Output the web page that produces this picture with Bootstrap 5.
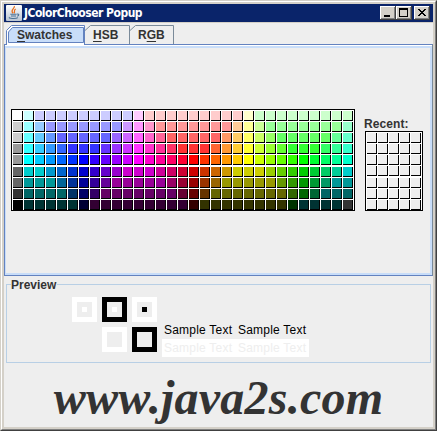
<!DOCTYPE html>
<html lang="en">
<head>
<meta charset="utf-8">
<title>JColorChooser Popup</title>
<link href="https://cdn.jsdelivr.net/npm/bootstrap@5.3.0/dist/css/bootstrap.min.css" rel="stylesheet">
<style>
body{margin:0;background:#eee;overflow:hidden;font:12px/14px "Liberation Sans",Arial,sans-serif;color:#333}
svg{display:block;flex:none}
.win{width:437px;height:431px;background:#eee;border:1px solid;border-color:#d4d0c8 #404040 #404040 #d4d0c8}
.bevel{height:429px;border:1px solid;border-color:#fff #808080 #808080 #fff}
.frame{height:427px;border:2px solid #d4d0c8}
.titlebar{height:18px;background:#0a246a;padding:0 3px 0 2px}
.caption{color:#fff;font:bold 12px/18px "DejaVu Sans Condensed","DejaVu Sans",sans-serif;font-stretch:condensed;letter-spacing:-.5px;padding-left:2px;white-space:nowrap}
.winbtn{width:16px;height:14px;padding:0;border:0;border-radius:0;background:#d4d0c8;box-shadow:inset -1px -1px #404040,inset 1px 1px #fff,inset -2px -2px #808080}
.winbtn.closer{margin-left:2px}
.strip{height:22px;border-top:1px solid #d4d0c8}
.tabs{padding:2px 0 0 2px}
.tabitem{height:20px;position:relative;font-weight:bold;white-space:nowrap}
.tabitem svg{position:absolute;left:0;top:0}
.tabitem span{position:relative;display:block;padding-top:3px}
.tabitem u{text-underline-offset:2px;text-decoration-thickness:1px}
.t1{width:79px}.t1 span{padding-left:11px}
.t2{width:45px}.t2 span{padding-left:8px}
.t3{width:44px}.t3 span{padding-left:8px}
.pane{height:232px;border:1px solid #6382bf;border-right-color:#7a8a99;box-shadow:inset 0 1px #fff,inset 0 3px #c8ddf9,inset -2px -2px #c8ddf9,inset 1px 0 #c8ddf9;padding:64px 0 0 6px}
.swatches,.recents{display:grid;gap:1px;border:1px solid #000;background:#fff;padding:1px 0 0 1px}
.swatches{grid-template-columns:repeat(31,10px);width:344px;height:102px}
.recents{grid-template-columns:repeat(5,10px);width:58px;height:80px}
.cell{height:10px;border:solid #000;border-width:0 1px 1px 0;background:#eee}
.recent-col{margin-left:10px}
.recent-label{font-weight:bold;height:14px;margin:8px 0 0 -1px;letter-spacing:.1px}
.preview{height:79px;margin:8px 2px 0;border:1px solid #b8cfe5;padding:12px 0 0 65px}
.legend-text{position:absolute;left:4px;top:-7px;background:#eee;font-weight:bold;padding:0 1px 0 0;line-height:14px}
.shapes{width:85px;gap:5px}
.ring{width:25px;height:25px;border:5px solid #fff}
.ring.dark{border-color:#000}
.dot{width:5px;height:5px;background:#fff}
.dot.dark{background:#000}
.samples{margin:24px 0 0 5px;width:147px;color:#000;letter-spacing:.22px}
.samples>div{height:18px;padding:2px 0 0 2px;gap:6px;white-space:nowrap}
.samples span{width:68px}
.samples .faint{background:#fff;color:#eee}
.brand{font:italic bold 48px/54px "Liberation Serif","Times New Roman",serif;text-align:center;height:64px;padding-top:8px;letter-spacing:.25px}
</style>
<script src="https://cdn.jsdelivr.net/npm/bootstrap@5.3.0/dist/js/bootstrap.bundle.min.js"></script>
</head>
<body>
<div class="win"><div class="bevel"><div class="frame">
  <div class="titlebar d-flex align-items-center">
    <svg width="16" height="16" viewBox="0 0 16 16"><defs><linearGradient id="g" x2="0" y2="1"><stop stop-color="#fff"/><stop offset="1" stop-color="#b9c4d2"/></linearGradient></defs><rect width="16" height="16" rx="1" fill="url(#g)"/><path d="M8.300 1C9.500 3.500 3.500 4.500 7 8.300M9.700 4C7 5.500 9.600 6.500 8 8.300" fill="none" stroke="#e76f1c" stroke-width="1.200"/><path d="M4.300 9.300h6.300M5 11h5M11 9.200c2.600-.8 2.200 1.700.2 2M3.600 12.300c-2 1.300 6.500 1.700 8.300.3" fill="none" stroke="#4b7297" stroke-width="1.100"/></svg>
    <div class="caption flex-grow-1">JColorChooser Popup</div>
    <button class="winbtn" aria-label="Minimize"><svg width="16" height="14"><path d="M4 9h6v2H4z"/></svg></button>
    <button class="winbtn" aria-label="Maximize"><svg width="16" height="14"><path d="M3 2h9v9H3zM4 4v6h7V4z" fill-rule="evenodd"/></svg></button>
    <button class="winbtn closer" aria-label="Close"><svg width="16" height="14" shape-rendering="crispEdges"><path d="M4 3h2v1h1v1h2V4h1V3h2v1h-1v1h-1v1H9v1h1v1h1v1h1v1h-2V9H9V8H7v1H6v1H4V9h1V8h1V7h1V6H6V5H5V4H4z"/></svg></button>
  </div>
  <div class="strip"><div class="tabs d-flex">
    <div class="tabitem t1"><svg width="79" height="21"><path d="M.5 20V5.500L5.500.5H78.500V20" fill="#fff" stroke="#6382bf"/><path d="M2.500 17.500V7L6.500 2.500H77.500V17.500z" fill="#c8ddf9" stroke="#6382bf"/><path d="M1 18h77v2H1z" fill="#fff"/></svg><span><u>S</u>watches</span></div>
    <div class="tabitem t2"><svg width="45" height="20"><path d="M0 5.500L5.500.5H44.500V19" fill="none" stroke="#7a8a99"/></svg><span><u>H</u>SB</span></div>
    <div class="tabitem t3"><svg width="44" height="20"><path d="M0 5.500L5.500.5H43.500V19" fill="none" stroke="#7a8a99"/></svg><span>R<u>G</u>B</span></div>
  </div></div>
  <div class="pane d-flex align-items-start">
    <div class="swatches" id="swatches"></div>
    <div class="recent-col"><div class="recent-label">Recent:</div><div class="recents" id="recents"></div></div>
  </div>
  <div class="preview d-flex position-relative">
    <div class="legend-text">Preview</div>
    <div class="shapes d-flex flex-wrap align-content-start justify-content-end">
      <div class="ring d-flex align-items-center justify-content-center"><i class="dot"></i></div>
      <div class="ring dark d-flex align-items-center justify-content-center"><i class="dot"></i></div>
      <div class="ring d-flex align-items-center justify-content-center"><i class="dot dark"></i></div>
      <div class="ring"></div>
      <div class="ring dark"></div>
    </div>
    <div class="samples">
      <div class="d-flex"><span>Sample Text</span><span>Sample Text</span></div>
      <div class="d-flex faint"><span>Sample Text</span><span>Sample Text</span></div>
    </div>
  </div>
  <div class="brand">www.java2s.com</div>
</div></div></div>
<script>
// Hue ring of 30 fully saturated web-safe steps, starting at cyan
const ring=[];
const F=255,steps=[255,204,153,102,51];
steps.forEach(v=>ring.push([0,v,F]));
steps.forEach(v=>ring.push([F-v,0,F]));
steps.forEach(v=>ring.push([F,0,v]));
steps.forEach(v=>ring.push([F,F-v,0]));
steps.forEach(v=>ring.push([v,F,0]));
steps.forEach(v=>ring.push([0,F,F-v]));
const greys=[255,204,204,153,153,102,102,51,0];
// Each row clamps the ring to a lower or an upper bound
const bounds=[[204,255],[153,255],[102,255],[51,255],[0,255],[0,204],[0,153],[0,102],[0,51]];
const host=document.getElementById('swatches');
bounds.forEach(([lo,hi],r)=>{
  const row=[[greys[r],greys[r],greys[r]],...ring.map(c=>c.map(v=>Math.min(hi,Math.max(lo,v))))];
  if(r===8){
    row[25]=[0,51,0];
    row[26]=[0,51,51];
    row[30]=[51,51,51];
  }
  row.forEach(c=>{
    const d=document.createElement('div');
    d.className='cell';
    d.style.backgroundColor=`rgb(${c})`;
    host.append(d);
  });
});
document.getElementById('recents').innerHTML='<div class="cell"></div>'.repeat(35);
</script>
</body>
</html>
